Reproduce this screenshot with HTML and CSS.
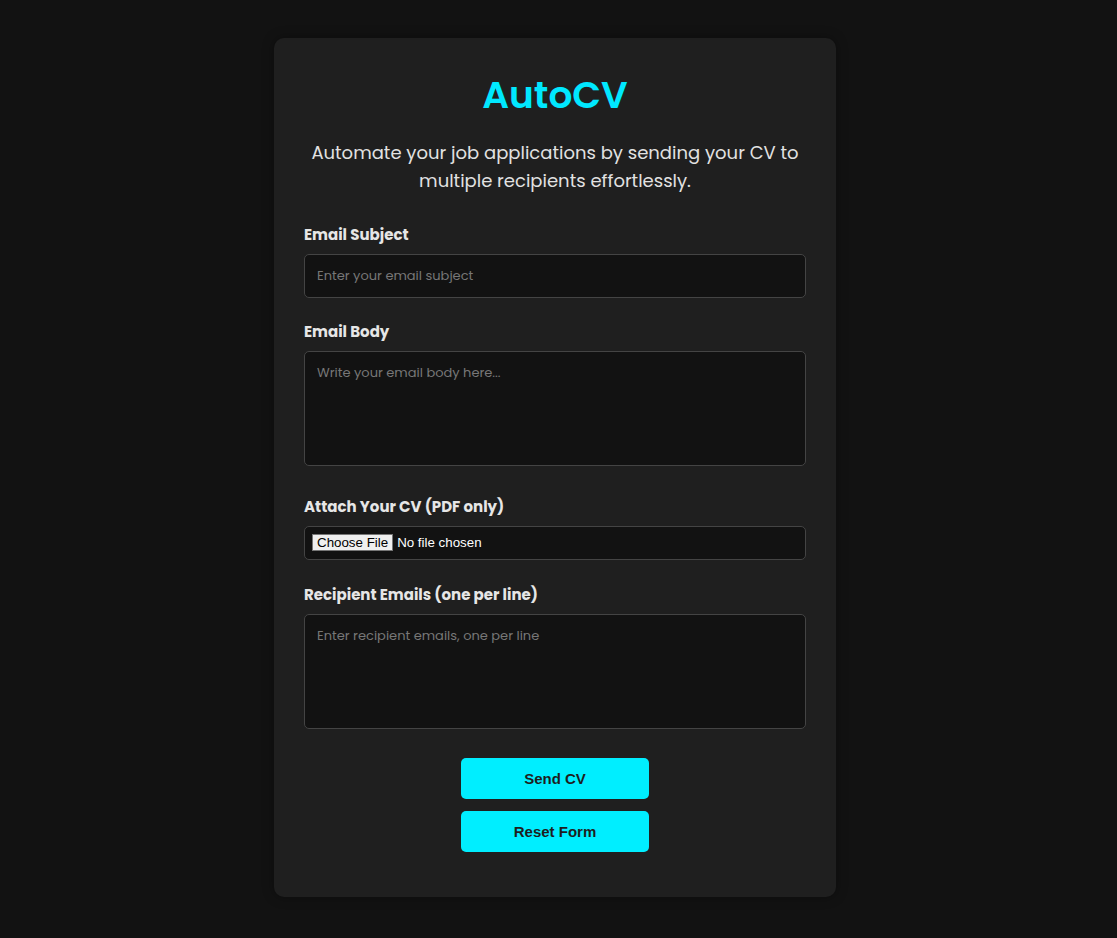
FILE: index.html
```html
<!DOCTYPE html>
<html lang="en">
<head>
<meta charset="utf-8">
<title>AutoCV</title>
<link rel="stylesheet" href="styles.css">
</head>
<body>
<main class="card">
  <h1 class="title">AutoCV</h1>
  <p class="subtitle">Automate your job applications by sending your CV to multiple recipients effortlessly.</p>
  <form class="form">
    <label class="label" for="subject">Email Subject</label>
    <input class="field field-input" id="subject" type="text" placeholder="Enter your email subject">

    <label class="label" for="body">Email Body</label>
    <textarea class="field field-area" id="body" placeholder="Write your email body here..."></textarea>

    <label class="label" for="cv">Attach Your CV (PDF only)</label>
    <input class="field field-file" id="cv" type="file" accept="application/pdf">

    <label class="label" for="recipients">Recipient Emails (one per line)</label>
    <textarea class="field field-area" id="recipients" placeholder="Enter recipient emails, one per line"></textarea>

    <div class="actions">
      <button class="btn" type="submit">Send CV</button>
      <button class="btn" type="reset">Reset Form</button>
    </div>
  </form>
</main>
</body>
</html>
```
FILE: styles.css
```css
* { box-sizing: border-box; }
html, body { margin: 0; padding: 0; }
body {
  background: #121212;
  font-family: "Poppins", "Open Sans", "Liberation Sans", sans-serif;
  color: #e0e0e0;
  display: flex;
  justify-content: center;
  padding: 38px 7px 0 0;
  min-height: 938px;
}
.card {
  width: 562px;
  height: 859px;
  background: #1f1f1f;
  border-radius: 10px;
  padding: 33px 30px 30px;
  box-shadow: 0 0 12px rgba(0,0,0,0.35);
  display: flex;
  flex-direction: column;
}
.title {
  margin: 0;
  text-align: center;
  color: #00e8ff;
  font-size: 37.5px;
  line-height: 48px;
  font-weight: 600;
}
.subtitle {
  margin: 20px 0 0;
  text-align: center;
  font-size: 18px;
  line-height: 28px;
  color: #e2e2e2;
}
.form {
  display: flex;
  flex-direction: column;
  margin-top: 29px;
}
.label {
  font-size: 15px;
  line-height: 22px;
  font-weight: 700;
  color: #e6e6e6;
  margin-bottom: 8px;
}
.field {
  width: 100%;
  display: block;
  background: #121212;
  border: 1px solid #444;
  border-radius: 5px;
  color: #e0e0e0;
  font-family: inherit;
  font-size: 13px;
  margin: 0 0 24px;
}
.field::placeholder { color: #777; }
.field-input {
  height: 44px;
  padding: 0 12px;
  margin-bottom: 23px;
}
.field-area {
  height: 115px;
  padding: 11px 12px;
  resize: none;
  margin-bottom: 30px;
}
.field-file {
  height: 34px;
  padding: 7px 7px;
  font-family: "Liberation Sans", Arial, sans-serif;
  font-size: 13.33px;
  color: #fff;
}
.field-file::file-selector-button {
  font-family: "Liberation Sans", Arial, sans-serif;
  font-size: 13.33px;
  background: #efefef;
  color: #000;
  border: 1px solid #767676;
  border-radius: 0;
  padding: 0 4px;
  margin-right: 4px;
  height: 17px;
}
.actions {
  display: flex;
  flex-direction: column;
  align-items: center;
  gap: 12px;
  margin-top: -1px;
}
.btn {
  width: 188px;
  height: 41px;
  border: none;
  border-radius: 5px;
  background: #00eeff;
  color: #1e1e1e;
  font-family: "Liberation Sans", Arial, sans-serif;
  font-weight: 700;
  font-size: 15px;
  cursor: pointer;
}
```
